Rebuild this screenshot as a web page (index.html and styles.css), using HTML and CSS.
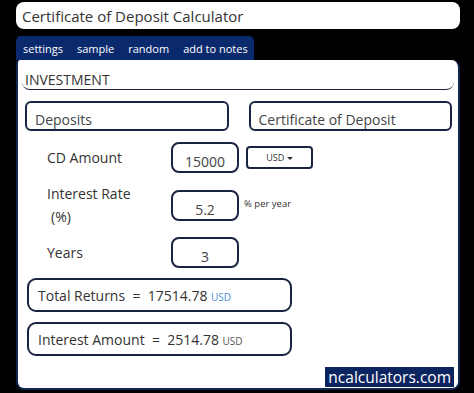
FILE: index.html
```html
<!DOCTYPE html>
<html lang="en">
<head>
    <meta charset="UTF-8">
    <title>Certificate of Deposit Calculator</title>
    <link rel="stylesheet" href="styles.css">
</head>
<body>
    <div class="calc">
        <div class="title-bar">Certificate of Deposit Calculator</div>

        <div class="tabs">
            <span>settings</span>
            <span>sample</span>
            <span>random</span>
            <span>add to notes</span>
        </div>

        <div class="card">
            <div class="section-head">INVESTMENT</div>

            <div class="mode-row">
                <div class="mode-box">Deposits</div>
                <div class="mode-box">Certificate of Deposit</div>
            </div>

            <div class="field first">
                <div class="label">CD Amount</div>
                <div class="input">15000</div>
                <div class="select">USD <span class="caret"></span></div>
            </div>

            <div class="field">
                <div class="label">Interest Rate<br><span class="sub">(%)</span></div>
                <div class="input">5.2</div>
                <div class="unit">% per year</div>
            </div>

            <div class="field">
                <div class="label">Years</div>
                <div class="input">3</div>
            </div>

            <div class="result">Total Returns&nbsp; = &nbsp;17514.78 <span class="cur blue">USD</span></div>
            <div class="result">Interest Amount&nbsp; = &nbsp;2514.78 <span class="cur">USD</span></div>

            <div class="brand-row">
                <span class="brand">ncalculators.com</span>
            </div>
        </div>
    </div>
</body>
</html>
```

FILE: styles.css
```css
body {
    margin: 0;
    background-color: #000;
    font-family: "Open Sans", Arial, sans-serif;
    color: #333;
}

.calc {
    padding: 2px 14px 0 16px;
}

.title-bar {
    background-color: #fff;
    border-radius: 8px;
    height: 27px;
    line-height: 29px;
    padding-left: 6px;
    font-size: 15px;
    color: #333;
}

.tabs {
    display: inline-flex;
    gap: 14px;
    margin-top: 7px;
    background-color: #0b2a6e;
    padding: 0 6px 0 7px;
    height: 24px;
    align-items: center;
    border-radius: 5px 5px 0 0;
    font-size: 11px;
    color: #fff;
}

.card {
    background-color: #fff;
    border: 2px solid #12264f;
    border-top: none;
    border-radius: 4px 8px 8px 8px;
    height: 328px;
    padding: 0 4px;
}

.section-head {
    padding: 10px 0 0 3px;
    font-size: 14px;
    height: 19px;
    border-bottom: 1.5px solid #1a2440;
    border-radius: 0 0 8px 8px;
}

.mode-row {
    display: flex;
    gap: 20px;
    padding: 11px 2px 0 3px;
}

.mode-box {
    flex: 1;
    height: 26px;
    border: 2px solid #1a2440;
    border-radius: 6px;
    padding: 0 8px;
    line-height: 34px;
    font-size: 14px;
    color: #444;
}

.field {
    display: flex;
    align-items: center;
    margin-top: 9px;
}

.field.first {
    margin-top: 11px;
}

.label {
    width: 124px;
    padding-left: 25px;
    font-size: 14px;
    line-height: 23px;
    color: #333;
}

.label .sub {
    padding-left: 4px;
}

.input {
    width: 64px;
    height: 27px;
    border: 2px solid #1a2440;
    border-radius: 8px;
    text-align: center;
    font-size: 14px;
    line-height: 36px;
    color: #444;
}

.select {
    margin-left: 7px;
    width: 63px;
    height: 19px;
    border: 2px solid #1a2440;
    border-radius: 4px;
    text-align: center;
    font-size: 9px;
    line-height: 20px;
    color: #333;
}

.caret {
    display: inline-block;
    border-left: 3px solid transparent;
    border-right: 3px solid transparent;
    border-top: 3px solid #333;
    vertical-align: middle;
}

.unit {
    align-self: flex-start;
    margin: 15px 0 0 5px;
    font-size: 9.5px;
    color: #333;
}

.result {
    width: 252px;
    height: 30px;
    margin: 10px 0 0 5px;
    border: 2px solid #1a2440;
    border-radius: 9px;
    padding-left: 9px;
    line-height: 32px;
    font-size: 14px;
    color: #333;
}

.result + .result {
    margin-top: 10px;
}

.cur {
    font-size: 10px;
    color: #555;
}

.cur.blue {
    color: #4a8fd6;
}

.brand-row {
    display: flex;
    justify-content: flex-end;
    margin-top: 11px;
}

.brand {
    background-color: #0c2460;
    color: #fff;
    font-size: 15.5px;
    line-height: 20px;
    padding: 0 3px;
}
```
